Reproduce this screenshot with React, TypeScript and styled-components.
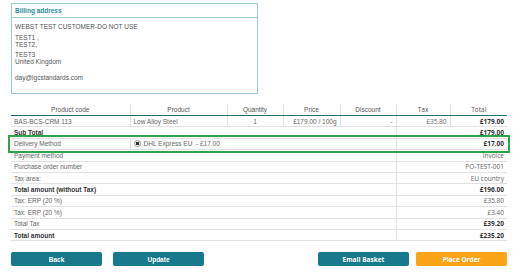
import React from "react";
import styled, { createGlobalStyle } from "styled-components";

const GlobalStyle = createGlobalStyle`
  body {
    margin: 0;
    background: #fff;
    font-family: "Liberation Sans", Arial, sans-serif;
    color: #555;
  }
`;

const Page = styled.div`
  width: 520px;
  height: 272px;
  padding: 3px 0 0 11px;
  box-sizing: border-box;
  overflow: hidden;
`;

const AddressBox = styled.div`
  width: 247px;
  height: 91px;
  box-sizing: border-box;
  border: 1px solid #9ccad1;
`;

const AddressTitle = styled.div`
  height: 14px;
  box-sizing: border-box;
  border-bottom: 1px solid #9ccad1;
  padding: 3px 0 0 3px;
  font-size: 6.5px;
  font-weight: bold;
  color: #2a8d9c;
`;

const AddressBody = styled.div`
  padding: 5px 0 0 3px;
  font-size: 6.5px;
  line-height: 7px;
  color: #555;
`;

const Para = styled.p<{ $gap?: number }>`
  margin: 0 0 ${(p) => p.$gap ?? 3}px 0;
`;

const Table = styled.table`
  margin-top: 10px;
  width: 496px;
  border-collapse: collapse;
  table-layout: fixed;
  font-size: 6.5px;
`;

const Th = styled.th<{ $sans?: boolean }>`
  height: 11px;
  padding: 0;
  font-weight: normal;
  color: #555;
  text-align: center;
  font-family: ${(p) =>
    p.$sans ? '"Open Sans", sans-serif' : '"Liberation Sans", Arial, sans-serif'};
  border-left: 1px solid #e2e2e2;
  border-bottom: 1px solid #1d6f7c;
  &:first-child {
    border-left: none;
  }
`;

const Row = styled.tr<{ $highlight?: boolean }>`
  outline: ${(p) => (p.$highlight ? "2px solid #2ea44a" : "none")};
  outline-offset: 1px;
`;

const Td = styled.td<{
  $align?: "left" | "center" | "right";
  $bold?: boolean;
  $sans?: boolean;
}>`
  height: 10.4px;
  padding: 0 3px;
  white-space: nowrap;
  overflow: hidden;
  text-align: ${(p) => p.$align ?? "left"};
  font-weight: ${(p) => (p.$bold ? "bold" : "normal")};
  color: ${(p) => (p.$bold ? "#333" : "#666")};
  font-family: ${(p) =>
    p.$sans ? '"Open Sans", sans-serif' : '"Liberation Sans", Arial, sans-serif'};
  border-bottom: 1px solid #e2e2e2;
  border-left: 1px solid #e2e2e2;
  &:first-child {
    border-left: none;
  }
`;

const Radio = styled.span`
  display: inline-block;
  width: 5px;
  height: 5px;
  border-radius: 50%;
  border: 1px solid #999;
  background: radial-gradient(circle, #333 0 1.5px, #eee 1.6px);
  vertical-align: -1px;
  margin-right: 3px;
`;

const Actions = styled.div`
  display: flex;
  width: 496px;
  margin-top: 11px;
  gap: 11px;
`;

const RightGroup = styled.div`
  display: flex;
  margin-left: auto;
  gap: 7px;
`;

const Button = styled.button<{ $orange?: boolean; $sans?: boolean }>`
  width: 91px;
  height: 14px;
  padding: 0;
  border: none;
  border-radius: 2px;
  background: ${(p) => (p.$orange ? "#fba417" : "#17798b")};
  color: #fff;
  font-size: 6.5px;
  font-weight: bold;
  font-family: ${(p) =>
    p.$sans ? '"Open Sans", sans-serif' : '"Liberation Sans", Arial, sans-serif'};
`;

const summary: [string, string, boolean, boolean][] = [
  ["Payment method", "Invoice", false, false],
  ["Purchase order number", "PO-TEST-001", false, false],
  ["Tax area:", "EU country", false, false],
  ["Total amount (without Tax)", "£196.00", true, true],
  ["Tax: ERP (20 %)", "£35.80", false, false],
  ["Tax: ERP (20 %)", "£3.40", false, false],
  ["Total Tax", "£39.20", false, true],
  ["Total amount", "£235.20", true, true],
];

export default function App() {
  return (
    <>
      <GlobalStyle />
      <Page>
        <AddressBox>
          <AddressTitle>Billing address</AddressTitle>
          <AddressBody>
            <Para $gap={4}>WEBST TEST CUSTOMER-DO NOT USE</Para>
            <Para>
              TEST1 ,<br />
              TEST2,
            </Para>
            <Para $gap={9}>
              TEST3
              <br />
              United Kingdom
            </Para>
            <Para>day@lgcstandards.com</Para>
          </AddressBody>
        </AddressBox>

        <Table>
          <colgroup>
            <col style={{ width: 119 }} />
            <col style={{ width: 97 }} />
            <col style={{ width: 56 }} />
            <col style={{ width: 57 }} />
            <col style={{ width: 56 }} />
            <col style={{ width: 54 }} />
            <col style={{ width: 57 }} />
          </colgroup>
          <thead>
            <tr>
              <Th>Product code</Th>
              <Th>Product</Th>
              <Th>Quantity</Th>
              <Th>Price</Th>
              <Th>Discount</Th>
              <Th $sans>Tax</Th>
              <Th $sans>Total</Th>
            </tr>
          </thead>
          <tbody>
            <Row>
              <Td>BAS-BCS-CRM 113</Td>
              <Td>Low Alloy Steel</Td>
              <Td $align="center">1</Td>
              <Td $align="right">£179.00 / 100g</Td>
              <Td $align="right">-</Td>
              <Td $align="right" $sans>£35.80</Td>
              <Td $align="right" $sans $bold>£179.00</Td>
            </Row>
            <Row>
              <Td colSpan={5} $bold>Sub Total</Td>
              <Td colSpan={2} $align="right" $sans $bold>£179.00</Td>
            </Row>
            <Row $highlight>
              <Td>Delivery Method</Td>
              <Td colSpan={4}>
                <Radio />
                DHL Express EU&nbsp; - £17.00
              </Td>
              <Td colSpan={2} $align="right" $sans $bold>£17.00</Td>
            </Row>
            {summary.map(([label, value, boldLabel, boldValue], i) => (
              <Row key={i}>
                <Td colSpan={5} $bold={boldLabel}>{label}</Td>
                <Td colSpan={2} $align="right" $sans $bold={boldValue}>
                  {value}
                </Td>
              </Row>
            ))}
          </tbody>
        </Table>

        <Actions>
          <Button>Back</Button>
          <Button>Update</Button>
          <RightGroup>
            <Button $sans>Email Basket</Button>
            <Button $sans $orange>Place Order</Button>
          </RightGroup>
        </Actions>
      </Page>
    </>
  );
}
